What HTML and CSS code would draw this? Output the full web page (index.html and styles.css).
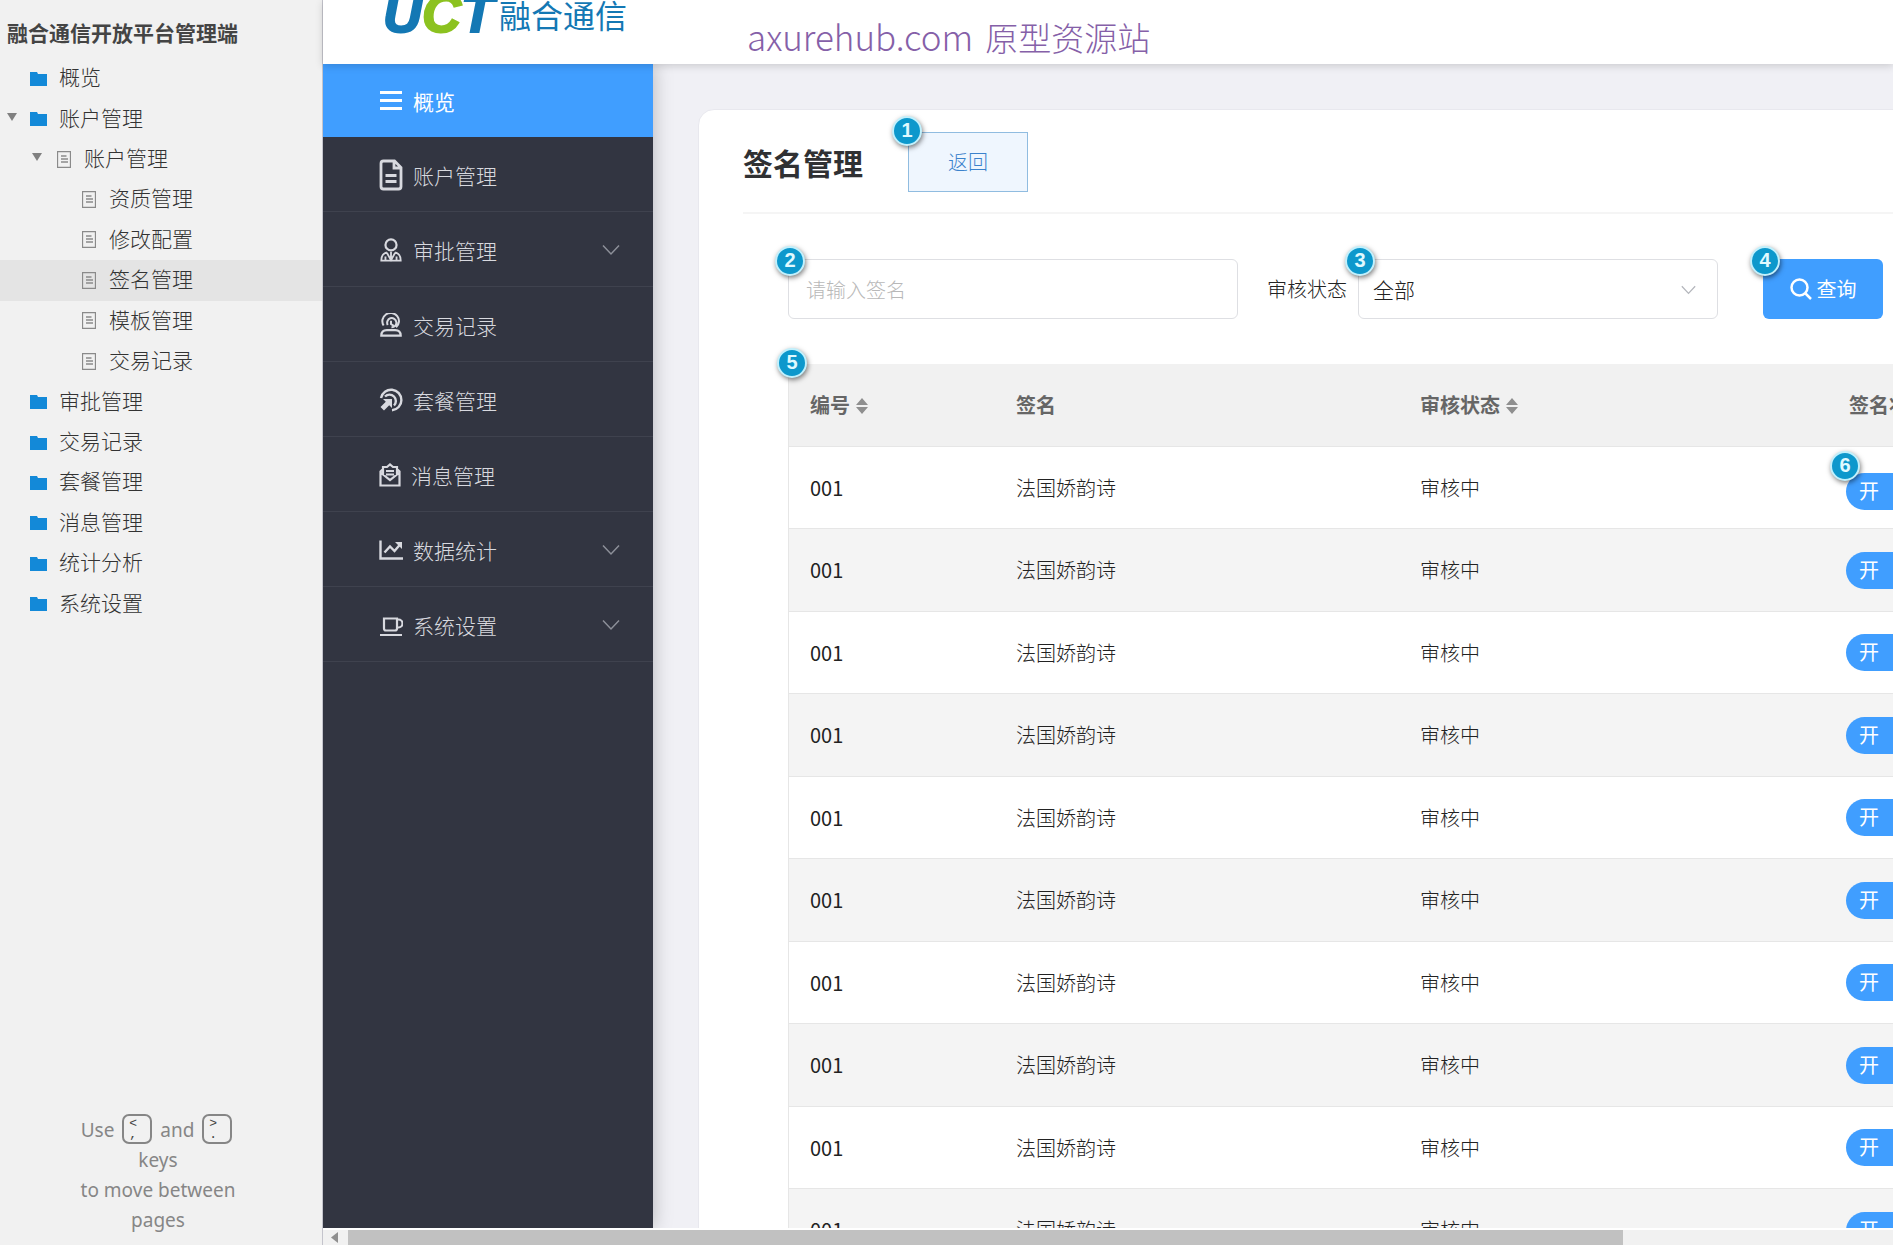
FILE: index.html
```html
<!DOCTYPE html>
<html lang="zh-CN">
<head>
<meta charset="utf-8">
<title>签名管理</title>
<link rel="stylesheet" href="styles.css">
</head>
<body>
<svg class="defs" aria-hidden="true">
  <symbol id="folder" viewBox="0 0 17 15"><path d="M0 1h7l1 2h9v12H0z" fill="#1389d8"/></symbol>
  <symbol id="page" viewBox="0 0 14 17"><path d="M.5.500h13v16H.5zM4 5h5.500M4 8h7M4 11h7" fill="none" stroke="#8a8a8a" stroke-width="1.300"/></symbol>
  <symbol id="open" viewBox="0 0 10 8"><path d="M0 0h10L5 8z" fill="#808080"/></symbol>
  <symbol id="chevron" viewBox="0 0 18 12"><path d="M1 1.500l8 8.500 8-8.500" fill="none" stroke="currentColor" stroke-width="1.500"/></symbol>
  <symbol id="sort" viewBox="0 0 12 16"><path d="M6 0l6 7H0zM6 16l6-7H0z" fill="#8f8f8f"/></symbol>
</svg>
<div class="app">
  <aside class="sitemap">
    <h1 class="sitemap-title">融合通信开放平台管理端</h1>
    <nav class="tree">
      <a class="node" href="#"><span class="slot"></span><svg class="folder"><use href="#folder"/></svg>概览</a>
      <a class="node" href="#"><svg class="slot"><use href="#open"/></svg><svg class="folder"><use href="#folder"/></svg>账户管理</a>
      <a class="node level-2" href="#"><svg class="slot"><use href="#open"/></svg><svg class="page"><use href="#page"/></svg>账户管理</a>
      <a class="node level-3" href="#"><span class="slot"></span><svg class="page"><use href="#page"/></svg>资质管理</a>
      <a class="node level-3" href="#"><span class="slot"></span><svg class="page"><use href="#page"/></svg>修改配置</a>
      <a class="node level-3 selected" href="#"><span class="slot"></span><svg class="page"><use href="#page"/></svg>签名管理</a>
      <a class="node level-3" href="#"><span class="slot"></span><svg class="page"><use href="#page"/></svg>模板管理</a>
      <a class="node level-3" href="#"><span class="slot"></span><svg class="page"><use href="#page"/></svg>交易记录</a>
      <a class="node" href="#"><span class="slot"></span><svg class="folder"><use href="#folder"/></svg>审批管理</a>
      <a class="node" href="#"><span class="slot"></span><svg class="folder"><use href="#folder"/></svg>交易记录</a>
      <a class="node" href="#"><span class="slot"></span><svg class="folder"><use href="#folder"/></svg>套餐管理</a>
      <a class="node" href="#"><span class="slot"></span><svg class="folder"><use href="#folder"/></svg>消息管理</a>
      <a class="node" href="#"><span class="slot"></span><svg class="folder"><use href="#folder"/></svg>统计分析</a>
      <a class="node" href="#"><span class="slot"></span><svg class="folder"><use href="#folder"/></svg>系统设置</a>
    </nav>
    <p class="hint">Use <kbd class="key">&lt;<br>,</kbd> and <kbd class="key">&gt;<br>.</kbd><br>keys<br>to move between<br>pages</p>
  </aside>

  <div class="frame">
    <header class="topbar">
      <div class="logo"><span class="logo-mark">U<span class="logo-c">C</span>T</span><span class="logo-name">融合通信</span></div>
      <div class="site"><span class="site-domain">axurehub.com</span><span>原型资源站</span></div>
    </header>
    <div class="body">
      <nav class="menu">
        <a class="item active" href="#"><svg class="icon" viewBox="0 0 24 24"><path d="M1 3.500h22M1 11.500h22M1 19.500h22" stroke-width="3.200"/></svg>概览</a>
        <a class="item" href="#"><svg class="icon icon-tall" viewBox="0 0 24 32"><path d="M15.500 2H4.500A2.500 2.500 0 0 0 2 4.500v23A2.500 2.500 0 0 0 4.500 30h15a2.500 2.500 0 0 0 2.500-2.500V8.500zM15 2.500V9h6.500M6.500 16.500h11M6.500 22.500h11" stroke-width="2.800"/></svg>账户管理</a>
        <a class="item" href="#"><svg class="icon" viewBox="0 0 24 26"><circle cx="12" cy="7.500" r="6"/><path d="M7.500 15.500C3.500 16.500 1.500 19 1.500 24.500h21c0-5.500-2-8-6-9M7.500 16l4.500 8 4.500-8M12 15v9M6 20v4M18 20v4" stroke-width="2"/></svg>审批管理<svg class="more"><use href="#chevron"/></svg></a>
        <a class="item" href="#"><svg class="icon" viewBox="0 0 24 26"><path d="M4 13.500A9 8.800 0 1 1 17.500 15.500M8.500 13a5 5 0 1 1 4 2.500M12 8.500v3.500l3 2" stroke-width="2.200"/><path d="M1.500 24.500c0-4 2-6 6-6h9c4 0 6 2 6 6z"/></svg>交易记录</a>
        <a class="item" href="#"><svg class="icon" viewBox="0 0 24 24"><path d="M2 10A10.300 10.300 0 1 1 13 22.300M6 8.500A6.300 6.300 0 1 1 15 17.500" /><path d="M4 11l9 0 0 9-2.800-2.800L5 22.500 1.500 19l5.300-5.200z" fill="currentColor" stroke="none"/></svg>套餐管理</a>
        <a class="item" href="#"><svg class="icon icon-small" viewBox="0 0 22 24"><path d="M1.500 8.500L4 6V4h4l3-2.500L14 4h4v2l2.500 2.500v14h-19zM1.500 9.500L11 17l9.500-7.500M4 6v6M18 6v6M7 8h8M7 11.500h8" stroke-width="2.200"/></svg>消息管理</a>
        <a class="item" href="#"><svg class="icon" viewBox="0 0 24 24"><path d="M1.500 2.500v18H24M5.500 14.500l5.500-6 4.500 4.500 6-7" /><path d="M16 4h7v7z" fill="currentColor" stroke="none"/></svg>数据统计<svg class="more"><use href="#chevron"/></svg></a>
        <a class="item" href="#"><svg class="icon" viewBox="0 0 24 24"><path d="M5 5.500h13v10a2 2 0 0 1-2 2H7a2 2 0 0 1-2-2zM18 6.500h1.500a4 4 0 0 1 0 8H18M1 22h22" stroke-width="2.200"/></svg>系统设置<svg class="more"><use href="#chevron"/></svg></a>
      </nav>
      <main class="content">
        <section class="panel">
          <div class="panel-head">
            <h2 class="panel-title">签名管理</h2>
            <div class="anchor"><button class="back" type="button">返回</button><span class="note note-corner">1</span></div>
          </div>
          <form class="filters">
            <div class="anchor"><input class="field keyword" type="text" placeholder="请输入签名" aria-label="签名"><span class="note">2</span></div>
            <label class="label" for="status">审核状态</label>
            <div class="anchor"><select class="field status" id="status"><option>全部</option></select><svg class="caret" viewBox="0 0 18 12"><use href="#chevron"/></svg><span class="note">3</span></div>
            <div class="anchor query"><button class="search" type="button"><svg class="lens" viewBox="0 0 22 22"><circle cx="9.500" cy="9.500" r="8"/><path d="M15 15l6 6"/></svg>查询</button><span class="note">4</span></div>
          </form>
          <div class="anchor table-wrap">
            <table class="grid">
              <thead><tr><th class="c-id">编号<svg class="sort"><use href="#sort"/></svg></th><th class="c-sign">签名</th><th class="c-status">审核状态<svg class="sort"><use href="#sort"/></svg></th><th>签名状态</th></tr></thead>
              <tbody>
                <tr><td class="num">001</td><td>法国娇韵诗</td><td>审核中</td><td class="noted"><label class="anchor switch"><input class="toggle" type="checkbox" checked><span class="on">开</span><span class="note note-corner">6</span></label></td></tr>
                <tr><td class="num">001</td><td>法国娇韵诗</td><td>审核中</td><td><label class="anchor switch"><input class="toggle" type="checkbox" checked><span class="on">开</span></label></td></tr>
                <tr><td class="num">001</td><td>法国娇韵诗</td><td>审核中</td><td><label class="anchor switch"><input class="toggle" type="checkbox" checked><span class="on">开</span></label></td></tr>
                <tr><td class="num">001</td><td>法国娇韵诗</td><td>审核中</td><td><label class="anchor switch"><input class="toggle" type="checkbox" checked><span class="on">开</span></label></td></tr>
                <tr><td class="num">001</td><td>法国娇韵诗</td><td>审核中</td><td><label class="anchor switch"><input class="toggle" type="checkbox" checked><span class="on">开</span></label></td></tr>
                <tr><td class="num">001</td><td>法国娇韵诗</td><td>审核中</td><td><label class="anchor switch"><input class="toggle" type="checkbox" checked><span class="on">开</span></label></td></tr>
                <tr><td class="num">001</td><td>法国娇韵诗</td><td>审核中</td><td><label class="anchor switch"><input class="toggle" type="checkbox" checked><span class="on">开</span></label></td></tr>
                <tr><td class="num">001</td><td>法国娇韵诗</td><td>审核中</td><td><label class="anchor switch"><input class="toggle" type="checkbox" checked><span class="on">开</span></label></td></tr>
                <tr><td class="num">001</td><td>法国娇韵诗</td><td>审核中</td><td><label class="anchor switch"><input class="toggle" type="checkbox" checked><span class="on">开</span></label></td></tr>
                <tr><td class="num">001</td><td>法国娇韵诗</td><td>审核中</td><td><label class="anchor switch"><input class="toggle" type="checkbox" checked><span class="on">开</span></label></td></tr>
              </tbody>
            </table>
            <span class="note note-table">5</span>
          </div>
        </section>
      </main>
    </div>
    <div class="scrollbar"><svg class="scroll-left" viewBox="0 0 8 11"><path d="M7 0v11L0 5.500z" fill="#8f8f8f"/></svg><div class="track"><div class="thumb"></div></div></div>
  </div>
</div>
</body>
</html>
```
FILE: styles.css
```css
* { box-sizing: border-box; }
body {
  margin: 0;
  font-family: "Noto Sans CJK SC", sans-serif;
  font-weight: 300;
  font-size: 20px;
  line-height: 30px;
  color: #222;
}
a { color: inherit; text-decoration: none; }
button, input, select { font: inherit; margin: 0; }
.defs { display: none; }
.app { display: flex; height: 100vh; overflow: hidden; }

/* Page tree */
.sitemap {
  flex: none;
  display: flex;
  flex-direction: column;
  width: 323px;
  background: #f1f1f1;
  border-right: 1px solid #c4c4cc;
}
.sitemap-title { margin: 0; padding: 17px 7px 11px; font-size: 21px; line-height: 30px; font-weight: 700; color: #444; }
.tree { display: grid; grid-auto-rows: 1fr; height: 566px; font-size: 21px; color: #333; }
.node { display: flex; align-items: center; padding: 0 0 4px 7px; }
.level-2 { padding-left: 32px; }
.level-3 { padding-left: 57px; }
.selected { background: #e4e4e4; }
.slot { width: 10px; height: 8px; margin-right: 13px; }
.folder { width: 17px; height: 15px; margin: 4px 12px 0 0; }
.page { width: 14px; height: 17px; margin: 4px 13px 0 2px; }
.hint {
  margin: auto 0 10px;
  padding-right: 6px;
  text-align: center;
  font-family: "Noto Sans", sans-serif;
  font-size: 19px;
  font-weight: 400;
  color: #868686;
}
.key {
  display: inline-block;
  width: 30px;
  height: 30px;
  margin: 0 3px;
  padding: 2px 0 0 5px;
  border: 2px solid #868686;
  border-radius: 7px;
  vertical-align: -1px;
  text-align: left;
  font: 13px/11px "Liberation Mono", monospace;
  color: #444;
}

/* Prototype frame */
.frame { flex: 1; display: flex; flex-direction: column; min-width: 0; background: #f0f0f5; }
.topbar {
  position: relative;
  z-index: 2;
  flex: none;
  display: flex;
  height: 64px;
  background: #fff;
  box-shadow: 0 2px 8px rgba(0, 0, 0, .16);
}
.logo { display: flex; flex: none; width: 424px; height: 34px; padding-left: 60px; overflow: hidden; align-items: flex-end; color: #1478b4; }
.logo-mark { flex: none; width: 116px; font: italic 700 54px/42px "Liberation Sans", sans-serif; -webkit-text-stroke: 2px currentColor; }
.logo-c { color: #8cc220; }
.logo-name { flex: none; font-size: 32px; line-height: 40px; font-weight: 400; }
.site { display: flex; align-items: baseline; gap: 12px; font-size: 33px; line-height: 48px; padding-top: 12px; color: #8560a8; white-space: nowrap; }
.site-domain { font-size: 35px; }
.body { flex: 1; display: flex; min-height: 0; overflow: hidden; }

.menu {
  position: relative;
  z-index: 1;
  flex: none;
  width: 330px;
  background: #323541;
  box-shadow: 0 0 18px rgba(0, 0, 0, .25);
  font-size: 21px;
  color: #d8d9df;
}
.item { display: flex; align-items: center; height: 75px; padding: 2px 33px 0 56px; border-bottom: 1px solid #3f424e; }
.active { height: 73px; padding-top: 0; border: 0; background: #409eff; color: #fff; font-weight: 400; }
.icon { width: 24px; height: 24px; margin-right: 10px; fill: none; stroke: currentColor; stroke-width: 2.4px; }
.icon-tall { height: 32px; }
.icon-small { width: 22px; }
.more { width: 18px; height: 12px; margin-left: auto; color: #8d9099; }

.content { flex: 1; min-width: 0; overflow: hidden; padding: 45px 0 0 45px; }
.panel { min-width: 1400px; padding: 22px 0 0 44px; background: #fff; border: 1px solid #e8e8ee; border-radius: 16px 0 0 0; }
.panel-head { display: flex; align-items: center; gap: 45px; padding-bottom: 20px; border-bottom: 2px solid #f5f5f5; }
.panel-title { margin: 0; font-size: 30px; line-height: 45px; font-weight: 700; color: #303133; }
.anchor { position: relative; }
.back { display: block; width: 120px; height: 60px; background: #eff6fe; border: 1px solid #90bce0; color: #3b82cc; }
.note {
  position: absolute;
  left: -13px;
  top: -13px;
  width: 30px;
  height: 30px;
  border: 2px solid #c2f0fc;
  border-radius: 50%;
  background: #0d98cc;
  box-shadow: 1px 2px 5px rgba(0, 0, 0, .5);
  color: #e0faff;
  font: 700 20px/25px "Liberation Sans", sans-serif;
  text-align: center;
}
.note-corner { left: -16px; top: -16px; }
.note-table { left: -11px; top: -16px; }

.filters { display: flex; align-items: center; padding: 45px 0 45px 45px; }
.field { display: block; height: 60px; border: 1px solid #dedfe3; border-radius: 6px; background: #fff; color: #222; outline: 0; }
.keyword { width: 450px; padding: 0 17px; }
.keyword::placeholder { color: #b8b8b8; opacity: 1; }
.label { width: 120px; padding-left: 29px; white-space: nowrap; }
.status { width: 360px; padding: 0 14px; font-size: 21px; appearance: none; }
.caret { position: absolute; right: 22px; top: 26px; width: 15px; height: 10px; color: #b4b6bc; pointer-events: none; }
.query { margin-left: 45px; }
.search { display: flex; align-items: center; justify-content: center; gap: 5px; width: 120px; height: 60px; padding: 0; border: 0; border-radius: 6px; background: #409eff; color: #fff; font-weight: 400; }
.lens { width: 22px; height: 22px; fill: none; stroke: currentColor; stroke-width: 2.5px; }

.table-wrap { margin-left: 45px; }
.grid { width: 100%; table-layout: fixed; border-collapse: separate; border-spacing: 0; border-left: 1px solid #e6e6e6; }
.grid th, .grid td { padding: 0 0 0 21px; text-align: left; white-space: nowrap; border-bottom: 1px solid #e6e6e6; }
.grid th { height: 83px; background: #f1f1f1; color: #666; font-weight: 700; }
.grid td { height: 82px; }
.grid tr:nth-child(even) td { height: 83px; background: #f4f4f4; }
.grid .num { font-weight: 400; }
.c-id { width: 206px; }
.c-sign { width: 404px; }
.c-status { width: 429px; }
.sort { width: 12px; height: 16px; margin-left: 6px; vertical-align: -1px; }
.grid td.noted { padding-top: 8px; }
.switch { display: block; width: 80px; height: 37px; margin-left: -3px; }
.toggle { display: block; width: 80px; height: 37px; appearance: none; border-radius: 19px; background: #409eff; }
.on { position: absolute; left: 13px; top: 3px; color: #fff; font-weight: 400; }
.switch .note { top: -22px; }

.scrollbar { flex: none; display: flex; align-items: center; height: 17px; border-top: 2px solid #fff; background: #f1f1f1; }
.scroll-left { width: 8px; height: 11px; margin: 0 9px 0 8px; }
.track { flex: 1; height: 15px; }
.thumb { width: 82.5%; height: 15px; background: #c1c1c1; }
```
